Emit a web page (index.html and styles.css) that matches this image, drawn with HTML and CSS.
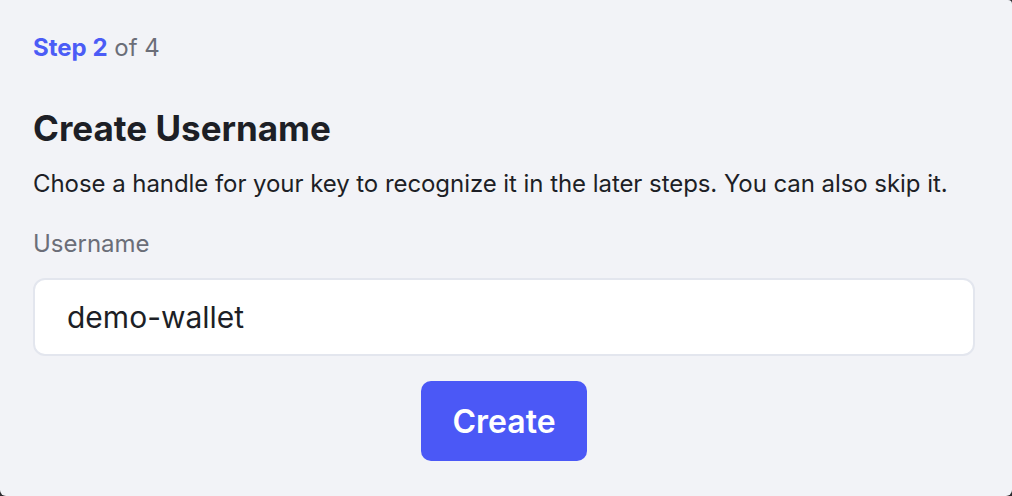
FILE: index.html
```html
<!DOCTYPE html>
<html>
<head>
<meta charset="utf-8">
<link rel="stylesheet" href="styles.css">
</head>
<body>
<div class="card">
  <div class="step"><span class="step-cur">Step 2</span> of 4</div>
  <h1 class="title">Create Username</h1>
  <p class="desc">Chose a handle for your key to recognize it in the later steps. You can also skip it.</p>
  <label class="label" for="u">Username</label>
  <input class="input" id="u" type="text" value="demo-wallet">
  <div class="actions"><button class="btn">Create</button></div>
</div>
</body>
</html>
```
FILE: styles.css
```css
html, body { margin: 0; padding: 0; }
body {
  background: #2b2b2e;
  width: 1012px;
  height: 496px;
  overflow: hidden;
  font-family: Inter, "Noto Sans", sans-serif;
}
.card {
  box-sizing: border-box;
  width: 1012px;
  height: 496px;
  background: #f2f3f7;
  border-radius: 0 4px 6px 6px;
  padding: 32px 37px 0 33px;
  display: flex;
  flex-direction: column;
}
.step {
  font-size: 24px;
  line-height: 32px;
  color: #6b6e78;
}
.step-cur { color: #4b5cf6; font-weight: 700; }
.title {
  margin: 44px 0 0;
  font-size: 35px;
  font-weight: 700;
  line-height: 40px;
  color: #1d1f26;
}
.desc {
  margin: 20px 0 0;
  font-size: 24px;
  line-height: 32px;
  letter-spacing: -0.06px;
  color: #1d1f26;
}
.label {
  margin-top: 28px;
  font-size: 24px;
  line-height: 32px;
  color: #6b6e78;
}
.input {
  box-sizing: border-box;
  margin-top: 18px;
  width: 942px;
  height: 78px;
  border: 2px solid #e3e6ee;
  border-radius: 12px;
  background: #fff;
  padding: 0 32px;
  font-family: Inter, "Noto Sans", sans-serif;
  font-size: 30px;
  color: #1d1f26;
  outline: none;
}
.actions {
  display: flex;
  justify-content: center;
  width: 942px;
  margin-top: 25px;
}
.btn {
  width: 166px;
  height: 80px;
  border: 0;
  border-radius: 10px;
  background: #4b58f6;
  color: #fff;
  font-family: Inter, "Noto Sans", sans-serif;
  font-size: 32px;
  font-weight: 600;
}
```
